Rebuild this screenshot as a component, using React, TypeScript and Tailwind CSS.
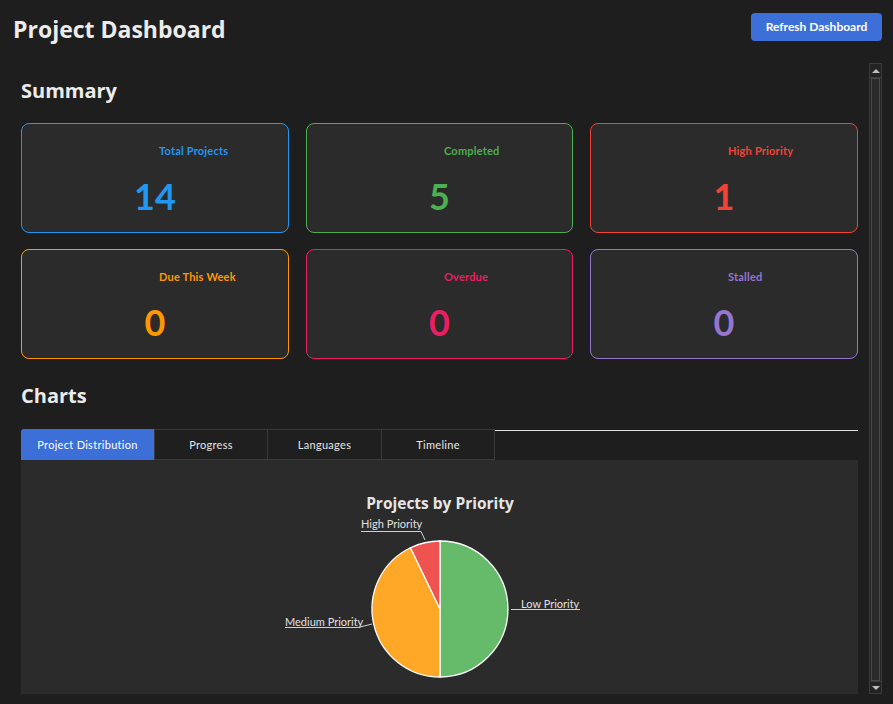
import React from "react";

const cards = [
  { label: "Total Projects", value: "14", color: "text-[#2196f3]", border: "border-[#2196f3]" },
  { label: "Completed", value: "5", color: "text-[#4caf50]", border: "border-[#4caf50]" },
  { label: "High Priority", value: "1", color: "text-[#f44336]", border: "border-[#f44336]" },
  { label: "Due This Week", value: "0", color: "text-[#ff9800]", border: "border-[#ff9800]" },
  { label: "Overdue", value: "0", color: "text-[#e91e63]", border: "border-[#e91e63]" },
  { label: "Stalled", value: "0", color: "text-[#9575cd]", border: "border-[#9575cd]" },
];

function Pie() {
  const cx = 419;
  const cy = 149;
  const r = 68;
  const ang = (334.3 * Math.PI) / 180;
  const px = cx + r * Math.sin(ang);
  const py = cy - r * Math.cos(ang);
  return (
    <svg width="837" height="234" viewBox="0 0 837 234" className="block">
      <text x="419" y="49" textAnchor="middle" fill="#e6e6e6" fontSize="15.5" fontWeight="700" fontFamily="'Open Sans', sans-serif">
        Projects by Priority
      </text>
      <path d={`M${cx},${cy} L${cx},${cy - r} A${r},${r} 0 0 1 ${cx},${cy + r} Z`} fill="#66bb6a" stroke="#ffffff" strokeWidth="1.3" />
      <path d={`M${cx},${cy} L${cx},${cy + r} A${r},${r} 0 0 1 ${px},${py} Z`} fill="#ffa726" stroke="#ffffff" strokeWidth="1.3" />
      <path d={`M${cx},${cy} L${px},${py} A${r},${r} 0 0 1 ${cx},${cy - r} Z`} fill="#ef5350" stroke="#ffffff" strokeWidth="1.3" />
      <polyline points="340,71.5 400,71.5 404,80" fill="none" stroke="#d0d0d0" strokeWidth="1" />
      <text x="340" y="68" fill="#e0e0e0" fontSize="11" fontFamily="Lato, sans-serif">High Priority</text>
      <polyline points="264,167.5 337,167.5 351,164" fill="none" stroke="#d0d0d0" strokeWidth="1" />
      <text x="264" y="166" fill="#e0e0e0" fontSize="11" fontFamily="Lato, sans-serif">Medium Priority</text>
      <polyline points="490,149.5 559,149.5" fill="none" stroke="#d0d0d0" strokeWidth="1" />
      <text x="500" y="148" fill="#e0e0e0" fontSize="11" fontFamily="Lato, sans-serif">Low Priority</text>
    </svg>
  );
}

export default function App() {
  return (
    <div className="w-[893px] h-[704px] bg-[#1e1e1e] overflow-hidden text-[#e6e6e6] font-['Lato',sans-serif]">
      <div className="flex items-start justify-between pl-[13px] pr-[11px] pt-[13px] h-[50px]">
        <h1 className="text-[23px] leading-[30px] font-bold mt-[1px] text-[#ececec] font-['Open_Sans',sans-serif]">Project Dashboard</h1>
        <button className="w-[131px] h-[28px] rounded-[4px] bg-[#3d6fd8] text-white text-[12px] font-bold">
          Refresh Dashboard
        </button>
      </div>
      <div className="flex h-[631px] mt-[13px]">
        <div className="flex-1 pl-[21px] pr-[11px] overflow-hidden">
          <h2 className="text-[20px] leading-[28px] font-bold mt-[14px] text-[#ececec] font-['Open_Sans',sans-serif]">Summary</h2>
          <div className="grid grid-cols-[268px_267px_268px] gap-x-[17px] gap-y-[16px] mt-[18px]">
            {cards.map((c) => (
              <div key={c.label} className={`h-[110px] rounded-[8px] border bg-[#2b2b2b] ${c.border} flex flex-col`}>
                <div className={`pl-[137px] mt-[19px] text-[11px] leading-[16px] font-bold tracking-[0.2px] ${c.color}`}>{c.label}</div>
                <div className={`text-center mt-[17px] text-[36px] leading-[40px] font-bold ${c.color}`}>{c.value}</div>
              </div>
            ))}
          </div>
          <h2 className="text-[20px] leading-[28px] font-bold mt-[23px] text-[#ececec] font-['Open_Sans',sans-serif]">Charts</h2>
          <div className="mt-[19px] flex items-start">
            <div className="w-[133px] h-[31px] pt-[2px] bg-[#3d6fd8] rounded-tl-[3px] flex items-center justify-center text-[11px] tracking-[0.3px] text-white">
              Project Distribution
            </div>
            <div className="w-[114px] h-[31px] pt-[2px] border border-[#3a3a3a] bg-[#1f1f1f] flex items-center justify-center text-[11px] tracking-[0.3px]">
              Progress
            </div>
            <div className="w-[114px] h-[31px] pt-[2px] border border-l-0 border-[#3a3a3a] bg-[#1f1f1f] flex items-center justify-center text-[11px] tracking-[0.3px]">
              Languages
            </div>
            <div className="w-[113px] h-[31px] pt-[2px] border border-l-0 border-[#3a3a3a] bg-[#1f1f1f] flex items-center justify-center text-[11px] tracking-[0.3px]">
              Timeline
            </div>
            <div className="flex-1 mt-[1px] h-[1px] bg-[#e0e0e0]" />
          </div>
          <div className="h-[234px] bg-[#2b2b2b]">
            <Pie />
          </div>
        </div>
        <div className="w-[13px] mr-[11px] flex flex-col border border-[#3a3a3a] bg-[#232323]">
          <div className="h-[14px] flex items-center justify-center border-b border-[#3a3a3a]">
            <div className="w-0 h-0 border-l-[4px] border-r-[4px] border-b-[4px] border-l-transparent border-r-transparent border-b-[#bdbdbd]" />
          </div>
          <div className="flex-1 mx-[1px] border border-[#4a4a4a] bg-[#2a2a2a]" />
          <div className="h-[12px] flex items-center justify-center border-t border-[#3a3a3a]">
            <div className="w-0 h-0 border-l-[4px] border-r-[4px] border-t-[4px] border-l-transparent border-r-transparent border-t-[#bdbdbd]" />
          </div>
        </div>
      </div>
    </div>
  );
}
